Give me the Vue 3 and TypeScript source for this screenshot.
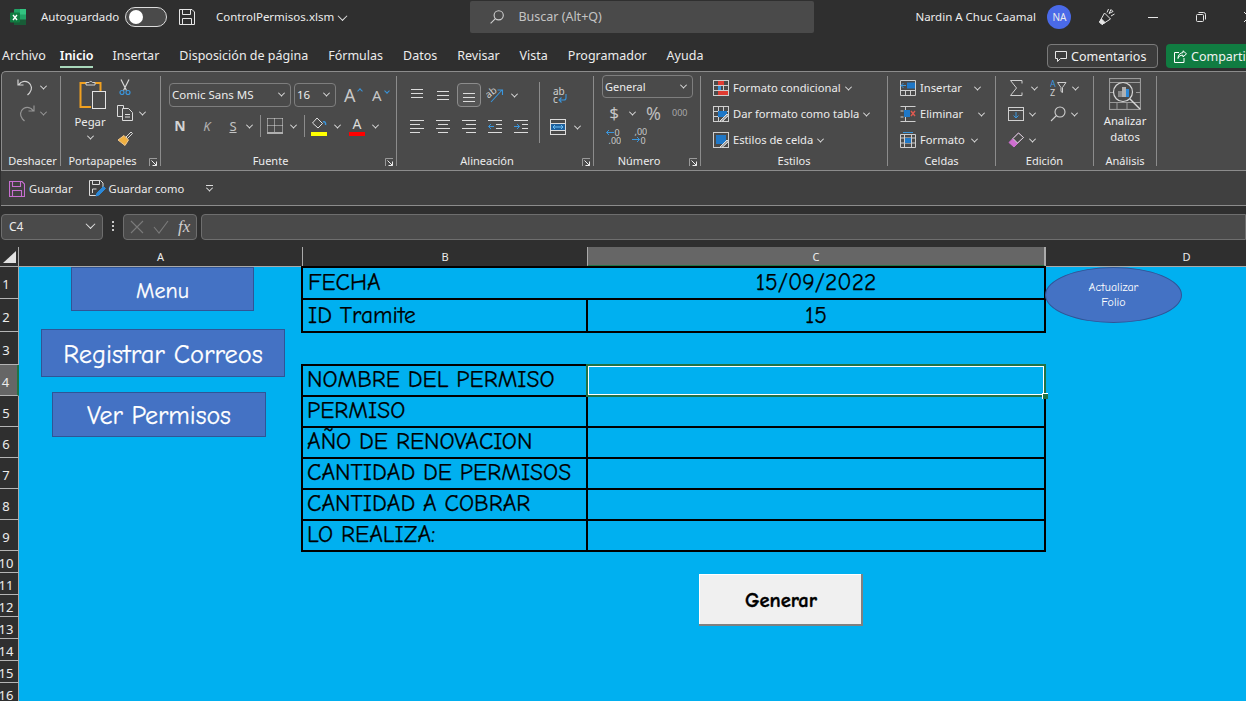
<script setup lang="ts">
interface SheetRow {
  num: number
  height: number
  label?: string
  value?: string
  kind?: 'merged' | 'cell'
}

const columns = [
  { name: 'A', active: false },
  { name: 'B', active: false },
  { name: 'C', active: true },
  { name: 'D', active: false }
]

const rows: SheetRow[] = [
  { num: 1, height: 32, label: 'FECHA', value: '15/09/2022', kind: 'merged' },
  { num: 2, height: 33, label: 'ID Tramite', value: '15', kind: 'cell' },
  { num: 3, height: 33 },
  { num: 4, height: 31, label: 'NOMBRE DEL PERMISO', kind: 'cell' },
  { num: 5, height: 31, label: 'PERMISO', kind: 'cell' },
  { num: 6, height: 31, label: 'AÑO DE RENOVACION', kind: 'cell' },
  { num: 7, height: 31, label: 'CANTIDAD DE PERMISOS', kind: 'cell' },
  { num: 8, height: 31, label: 'CANTIDAD A COBRAR', kind: 'cell' },
  { num: 9, height: 31, label: 'LO REALIZA:', kind: 'cell' },
  { num: 10, height: 22 },
  { num: 11, height: 22 },
  { num: 12, height: 22 },
  { num: 13, height: 22 },
  { num: 14, height: 22 },
  { num: 15, height: 22 },
  { num: 16, height: 22 }
]

const rowTracks = '20px ' + rows.map((r) => r.height + 'px').join(' ')

const tabs = ['Archivo', 'Inicio', 'Insertar', 'Disposición de página', 'Fórmulas', 'Datos', 'Revisar', 'Vista', 'Programador', 'Ayuda']

// x1, x2, y of every line in the 16x16 alignment glyphs
const alignTop = [[2, 14, 2], [2, 14, 6], [2, 14, 10]]
const alignMid = [[2, 14, 4], [2, 14, 8], [2, 14, 12]]
const alignBot = [[2, 14, 6], [2, 14, 10], [2, 14, 14]]
const alignLeft = [[1, 15, 2], [1, 11, 6], [1, 15, 10], [1, 11, 14]]
const alignCenter = [[1, 15, 2], [3, 13, 6], [1, 15, 10], [3, 13, 14]]
const alignRight = [[1, 15, 2], [5, 15, 6], [1, 15, 10], [5, 15, 14]]
const indentLines = [[1, 15, 2], [9, 15, 6], [9, 15, 10], [1, 15, 14]]
</script>

<template>
  <div class="app">
    <header class="title-bar">
      <svg class="xl-logo" width="16" height="16" viewBox="0 0 16 16">
        <rect x="4" y="0" width="12" height="16" rx="1" fill="#21a366" />
        <rect x="10" y="0" width="6" height="5.5" fill="#33c481" />
        <rect x="4" y="10.5" width="12" height="5.5" fill="#185c37" />
        <rect x="0" y="3.5" width="10" height="10" rx="1" fill="#107c41" />
        <path d="M3 6l4 5M7 6l-4 5" stroke="#fff" stroke-width="1.4" />
      </svg>
      <span class="auto-label">Autoguardado</span>
      <span class="toggle"><span class="knob"></span></span>
      <svg class="save-ico" width="16" height="16" viewBox="0 0 16 16" fill="none" stroke="#e6e6e6">
        <path d="M.5.5H13L15.5 3V15.5H.5z" />
        <path d="M3.5.5v5h8v-5M3.5 15.5v-6h9v6" />
      </svg>
      <span class="file-name">ControlPermisos.xlsm</span>
      <span class="chev chev-file"></span>
      <div class="search">
        <svg width="14" height="14" viewBox="0 0 14 14" fill="none" stroke="#d0d0d0" stroke-width="1.1">
          <circle cx="8.7" cy="5.3" r="4.6" />
          <path d="M5.4 8.6L.6 13.4" />
        </svg>
        <span>Buscar (Alt+Q)</span>
      </div>
      <span class="user">Nardin A Chuc Caamal</span>
      <span class="avatar">NA</span>
      <svg class="pen-ico" width="18" height="18" viewBox="0 0 18 18" fill="none" stroke="#e6e6e6">
        <path d="M6.5 5l6 6-8.500 5.500-2.500-2.500z" />
        <path d="M1.500 14l2-3 3.500 3.500-3 2z" fill="#e6e6e6" />
        <path d="M9 4.500L10.500 1M13 8l3.500-2M11 5.500l2-4 2 2z" />
      </svg>
      <span class="win-min"></span>
      <svg class="win-max" width="10" height="10" viewBox="0 0 10 10" fill="none" stroke="#e6e6e6">
        <rect x=".5" y="2.5" width="7" height="7" rx="1" />
        <path d="M2.5 .5h5a2 2 0 0 1 2 2v5" />
      </svg>
      <span class="win-close"></span>
    </header>

    <nav class="tabs">
      <span v-for="tab in tabs" :key="tab" class="tab" :class="{ 'tab-on': tab === 'Inicio', 'tab-first': tab === 'Archivo' }">{{ tab }}</span>
      <span class="tab-actions">
        <button class="comments">
          <svg width="12" height="12" viewBox="0 0 12 12" fill="none" stroke="#e6e6e6">
            <path d="M.5 1.500H11.500V8.500H5.500L2.500 11.500V8.500H.5z" />
          </svg>
          Comentarios
        </button>
        <button class="share">
          <svg width="13" height="13" viewBox="0 0 13 13" fill="none" stroke="#fff">
            <path d="M9 .8l3.500 3L9 7V5.200C6 5 4.500 6.500 4 8.500 4 5 6 2.800 9 2.600zM5 2.500H.5v10H10V8" />
          </svg>
          Compartir
        </button>
      </span>
    </nav>

    <section class="ribbon">
      <!-- Deshacer -->
      <div class="group g-undo">
        <div class="g-body stack-undo">
          <div class="irow">
            <svg width="18" height="18" viewBox="0 0 18 18" fill="none" stroke="#d2d2d2" stroke-width="1.2">
              <path d="M1 1.500V7H6.500M1.500 7C4 3.500 8 2.500 11.500 4.500c3.500 2.500 4 7 1 10.500l-2 2" />
            </svg>
            <span class="chev"></span>
          </div>
          <div class="irow dim">
            <svg width="18" height="18" viewBox="0 0 18 18" fill="none" stroke="#d2d2d2" stroke-width="1.2">
              <path d="M17 1.500V7H11.500M16.500 7C14 3.500 10 2.500 6.500 4.500c-3.500 2.500-4 7-1 10.500l2 2" />
            </svg>
            <span class="chev"></span>
          </div>
        </div>
        <div class="g-label label-undo">Deshacer</div>
      </div>

      <!-- Portapapeles -->
      <div class="group g-clip">
        <div class="g-body clip-body">
          <div class="paste">
            <svg width="28" height="30" viewBox="0 0 28 30" fill="none">
              <path d="M7 3H1.500V27H12" stroke="#f0a020" stroke-width="2" />
              <path d="M16 3h5.500v8" stroke="#f0a020" stroke-width="2" />
              <path d="M7 5V2.500h3a2 2 0 0 1 3.500 0H16V5z" stroke="#cfcfcf" />
              <rect x="13.500" y="11.500" width="13" height="17" stroke="#e4e4e4" />
            </svg>
            <span class="paste-label">Pegar</span>
            <span class="chev"></span>
          </div>
          <div class="clip-tools">
            <div class="irow">
              <svg width="16" height="16" viewBox="0 0 16 16" fill="none" stroke-width="1.2">
                <path d="M4 .5l5.500 11M12 .5L6.500 11.500" stroke="#d8d8d8" />
                <circle cx="5" cy="13.500" r="2" stroke="#3a96dd" />
                <circle cx="11" cy="13.500" r="2" stroke="#3a96dd" />
              </svg>
            </div>
            <div class="irow">
              <svg width="16" height="16" viewBox="0 0 16 16" fill="none" stroke="#dcdcdc">
                <path d="M6.500 3V.5h-6v11H5" />
                <path d="M5.500 3.500h6l4 4v8h-10zM8 9.500h5M8 12h5" />
              </svg>
              <span class="chev"></span>
            </div>
            <div class="irow">
              <svg width="16" height="16" viewBox="0 0 16 16" fill="none">
                <path d="M9 6l5-5 1.500 1.500-5 5z" stroke="#d8d8d8" />
                <path d="M7 4.500L11.500 9 8 14.500 1 9z" fill="#f0b040" stroke="#f0c890" />
              </svg>
            </div>
          </div>
        </div>
        <div class="g-label label-launch">Portapapeles</div>
        <svg class="launcher" width="8" height="8" viewBox="0 0 8 8" fill="none">
          <path d="M.5 8V.5H8" stroke="#9a9a9a" />
          <path d="M2.500 2.500l5 5M7.500 3.500v4h-4" stroke="#ececec" />
        </svg>
      </div>

      <!-- Fuente -->
      <div class="group g-font">
        <div class="g-body font-body">
          <div class="irow font-top">
            <span class="select font-name">Comic Sans MS<span class="chev"></span></span>
            <span class="select font-size">16<span class="chev"></span></span>
            <span class="grow">A<i class="caret-up"></i></span>
            <span class="shrink">A<i class="caret-down"></i></span>
          </div>
          <div class="irow font-bottom">
            <b class="fmt fmt-n">N</b>
            <i class="fmt fmt-k">K</i>
            <span class="fmt fmt-s">S</span>
            <span class="chev"></span>
            <span class="vsep"></span>
            <svg width="16" height="16" viewBox="0 0 16 16" fill="none" stroke="#dcdcdc">
              <path d="M.5 .5h15M.5 7.500h15M7.500 .5v14M.5 .5v14M15.500 .5v14" stroke-dasharray="1 1" />
              <path d="M0 15h16" stroke-width="1.4" />
            </svg>
            <span class="chev"></span>
            <span class="vsep"></span>
            <span class="swatch swatch-fill">
              <svg width="16" height="13" viewBox="0 0 16 13" fill="none">
                <path d="M6 1l5.500 5.500L7 11 1.500 6z" stroke="#e0e0e0" />
                <path d="M12 5c2-1 3 1 2.500 3" stroke="#3a96dd" stroke-width="1.5" />
              </svg>
            </span>
            <span class="chev"></span>
            <span class="swatch swatch-text">A</span>
            <span class="chev"></span>
          </div>
        </div>
        <div class="g-label label-launch">Fuente</div>
        <svg class="launcher" width="8" height="8" viewBox="0 0 8 8" fill="none">
          <path d="M.5 8V.5H8" stroke="#9a9a9a" />
          <path d="M2.500 2.500l5 5M7.500 3.500v4h-4" stroke="#ececec" />
        </svg>
      </div>

      <!-- Alineación -->
      <div class="group g-align">
        <div class="g-body align-body">
          <div class="align-grid">
            <div class="irow">
              <span class="abtn"><svg width="16" height="16" viewBox="0 0 16 16" stroke="#dcdcdc"><path v-for="(l, i) in alignTop" :key="i" :d="`M${l[0]} ${l[2] + 0.5}H${l[1]}`" /></svg></span>
              <span class="abtn"><svg width="16" height="16" viewBox="0 0 16 16" stroke="#dcdcdc"><path v-for="(l, i) in alignMid" :key="i" :d="`M${l[0]} ${l[2] + 0.5}H${l[1]}`" /></svg></span>
              <span class="abtn abtn-on"><svg width="16" height="16" viewBox="0 0 16 16" stroke="#dcdcdc"><path v-for="(l, i) in alignBot" :key="i" :d="`M${l[0]} ${l[2] + 0.5}H${l[1]}`" /></svg></span>
              <span class="abtn">
                <svg width="18" height="16" viewBox="0 0 18 16" fill="none">
                  <text x="0" y="9" class="orient" transform="rotate(-38 5 7)">ab</text>
                  <path d="M5 15L16 3M11.500 3H16.500V8" stroke="#3a96dd" stroke-width="1.1" />
                </svg>
              </span>
              <span class="chev"></span>
            </div>
            <div class="irow">
              <span class="abtn"><svg width="16" height="16" viewBox="0 0 16 16" stroke="#dcdcdc"><path v-for="(l, i) in alignLeft" :key="i" :d="`M${l[0]} ${l[2] + 0.5}H${l[1]}`" /></svg></span>
              <span class="abtn"><svg width="16" height="16" viewBox="0 0 16 16" stroke="#dcdcdc"><path v-for="(l, i) in alignCenter" :key="i" :d="`M${l[0]} ${l[2] + 0.5}H${l[1]}`" /></svg></span>
              <span class="abtn"><svg width="16" height="16" viewBox="0 0 16 16" stroke="#dcdcdc"><path v-for="(l, i) in alignRight" :key="i" :d="`M${l[0]} ${l[2] + 0.5}H${l[1]}`" /></svg></span>
              <span class="abtn">
                <svg width="16" height="16" viewBox="0 0 16 16" fill="none" stroke="#dcdcdc">
                  <path v-for="(l, i) in indentLines" :key="i" :d="`M${l[0]} ${l[2] + 0.5}H${l[1]}`" />
                  <path d="M7 8.500H1.500M4 6L1.500 8.500 4 11" stroke="#3a96dd" />
                </svg>
              </span>
              <span class="abtn">
                <svg width="16" height="16" viewBox="0 0 16 16" fill="none" stroke="#dcdcdc">
                  <path v-for="(l, i) in indentLines" :key="i" :d="`M${l[0]} ${l[2] + 0.5}H${l[1]}`" />
                  <path d="M1 8.500H6.500M4 6L6.500 8.500 4 11" stroke="#3a96dd" />
                </svg>
              </span>
            </div>
          </div>
          <span class="vsep tall"></span>
          <div class="wrap-col">
            <svg class="wrap-ico" width="16" height="18" viewBox="0 0 16 18" fill="none">
              <text x="1" y="8" class="orient">ab</text>
              <text x="1" y="16" class="orient">c</text>
              <path d="M14 7v4a2 2 0 0 1-2 2H7M9.500 10.500L7 13l2.500 2.500" stroke="#3a96dd" stroke-width="1.1" />
            </svg>
            <div class="irow merge">
              <svg width="16" height="16" viewBox="0 0 16 16" fill="none" stroke="#dcdcdc">
                <rect x=".5" y=".5" width="15" height="15" />
                <path d="M.5 4.500h15M.5 11.500h15" />
                <rect x="1" y="5" width="14" height="6" fill="#1d5f9c" stroke="none" />
                <path d="M3 8h10M5 6L3 8l2 2M11 6l2 2-2 2" stroke="#6cc0f5" />
              </svg>
              <span class="chev"></span>
            </div>
          </div>
        </div>
        <div class="g-label label-launch">Alineación</div>
        <svg class="launcher" width="8" height="8" viewBox="0 0 8 8" fill="none">
          <path d="M.5 8V.5H8" stroke="#9a9a9a" />
          <path d="M2.500 2.500l5 5M7.500 3.500v4h-4" stroke="#ececec" />
        </svg>
      </div>

      <!-- Número -->
      <div class="group g-num">
        <div class="g-body num-body">
          <span class="select num-format">General<span class="chev"></span></span>
          <div class="irow num-row">
            <span class="dollar">$</span>
            <span class="chev"></span>
            <span class="percent">%</span>
            <span class="thousands">000</span>
          </div>
          <div class="irow num-row2">
            <span class="dec">
              <svg width="16" height="16" viewBox="0 0 16 16" fill="none">
                <path d="M9 4.500H1.500M4 2L1.500 4.500 4 7" stroke="#3a96dd" />
                <text x="9.500" y="7.500" class="dec-text">0</text>
                <text x="3.500" y="15.500" class="dec-text">,00</text>
              </svg>
            </span>
            <span class="dec">
              <svg width="16" height="16" viewBox="0 0 16 16" fill="none">
                <path d="M1 11.500H8.500M6 9L8.500 11.500 6 14" stroke="#3a96dd" />
                <text x="3.500" y="7" class="dec-text">,00</text>
                <text x="9.500" y="15.500" class="dec-text">0</text>
              </svg>
            </span>
          </div>
        </div>
        <div class="g-label label-launch">Número</div>
        <svg class="launcher" width="8" height="8" viewBox="0 0 8 8" fill="none">
          <path d="M.5 8V.5H8" stroke="#9a9a9a" />
          <path d="M2.500 2.500l5 5M7.500 3.500v4h-4" stroke="#ececec" />
        </svg>
      </div>

      <!-- Estilos -->
      <div class="group g-styles">
        <div class="g-body list-body">
          <div class="irow list-row">
            <svg width="16" height="16" viewBox="0 0 16 16" fill="none" stroke="#cfcfcf">
              <rect x=".5" y=".5" width="15" height="15" />
              <path d="M5.500 .5v15M10.500 .5v15M.5 5.500h15M.5 10.500h15" />
              <rect x="5" y="1" width="6" height="4" fill="#e03c32" stroke="none" />
              <rect x="5" y="6" width="3" height="4" fill="#3a96dd" stroke="none" />
              <rect x="5" y="11" width="10" height="4" fill="#e03c32" stroke="none" />
            </svg>
            <span>Formato condicional</span><span class="chev"></span>
          </div>
          <div class="irow list-row">
            <svg width="16" height="16" viewBox="0 0 16 16" fill="none" stroke="#cfcfcf">
              <rect x=".5" y=".5" width="15" height="15" />
              <path d="M.5 5.500h15M.5 10.500h15M5.500 .5v15M10.500 .5v15" />
              <rect x="5" y="5" width="9" height="6" fill="#1f78c8" stroke="none" />
              <path d="M7 15l7-7 1.500 1.500-7 6.500z" fill="#9a9a9a" stroke="#e0e0e0" />
            </svg>
            <span>Dar formato como tabla</span><span class="chev"></span>
          </div>
          <div class="irow list-row">
            <svg width="16" height="16" viewBox="0 0 16 16" fill="none" stroke="#cfcfcf">
              <rect x=".5" y=".5" width="15" height="15" />
              <rect x="3" y="3" width="10" height="9" fill="#1f78c8" stroke="none" />
              <path d="M7 15l7-7 1.500 1.500-7 6.500z" fill="#9a9a9a" stroke="#e0e0e0" />
            </svg>
            <span>Estilos de celda</span><span class="chev"></span>
          </div>
        </div>
        <div class="g-label">Estilos</div>
      </div>

      <!-- Celdas -->
      <div class="group g-cells">
        <div class="g-body list-body">
          <div class="irow list-row">
            <svg width="16" height="16" viewBox="0 0 16 16" fill="none" stroke="#cfcfcf">
              <path d="M.5 .5h15v15H.5zM.5 10.500h15M5.500 10.500v5M10.500 10.500v5" />
              <rect x="7" y="2.500" width="8" height="6" fill="#1f78c8" stroke="none" />
              <path d="M6 5.500H1M3.500 3L1 5.500 3.500 8" stroke="#3a96dd" />
            </svg>
            <span class="cells-text ct-insert">Insertar</span><span class="chev"></span>
          </div>
          <div class="irow list-row">
            <svg width="16" height="16" viewBox="0 0 16 16" fill="none" stroke="#cfcfcf">
              <path d="M.5 .5h15M.5 15.500h15M.5 5h3M.5 11h3M5.500 .5v15" />
              <rect x="4" y="4" width="6" height="7" fill="#1f78c8" stroke="none" />
              <path d="M11 5l4 5M15 5l-4 5" stroke="#e05a50" stroke-width="1.4" />
            </svg>
            <span class="cells-text ct-delete">Eliminar</span><span class="chev"></span>
          </div>
          <div class="irow list-row">
            <svg width="16" height="16" viewBox="0 0 16 16" fill="none" stroke="#cfcfcf">
              <path d="M.5 2.500h15v13H.5zM.5 11h15M.5 6h15M4.500 2.500v13M11.500 2.500v13" />
              <rect x="5" y="6" width="6" height="5" fill="#1f78c8" stroke="none" />
              <path d="M3 .5h10" stroke="#3a96dd" />
            </svg>
            <span class="cells-text ct-format">Formato</span><span class="chev"></span>
          </div>
        </div>
        <div class="g-label">Celdas</div>
      </div>

      <!-- Edición -->
      <div class="group g-edit">
        <div class="g-body edit-body">
          <div class="irow edit-row">
            <span class="edit-cell">
              <svg class="sum-ico" width="16" height="16" viewBox="0 0 16 16" fill="none" stroke="#cfcfcf">
                <path d="M14 3.500V.5H2.500L8.500 8l-6 7.500H14v-3" />
              </svg>
              <span class="chev"></span>
            </span>
            <span class="edit-cell">
              <svg width="17" height="16" viewBox="0 0 17 16" fill="none">
                <text x="0" y="7" class="az az-a">A</text>
                <text x="0" y="16" class="az">Z</text>
                <path d="M7.500 2.500H16L12.500 7.500v5L11 11.500v-4z" stroke="#cfcfcf" />
              </svg>
              <span class="chev"></span>
            </span>
          </div>
          <div class="irow edit-row">
            <span class="edit-cell">
              <svg width="16" height="14" viewBox="0 0 16 14" fill="none" stroke="#cfcfcf">
                <rect x=".5" y=".5" width="15" height="13" />
                <path d="M.5 3.500h15" />
                <path d="M8 5v6M5.500 8.500L8 11l2.500-2.500" stroke="#3a96dd" />
              </svg>
              <span class="chev"></span>
            </span>
            <span class="edit-cell">
              <svg width="16" height="16" viewBox="0 0 16 16" fill="none" stroke="#cfcfcf" stroke-width="1.1">
                <circle cx="10" cy="6" r="5" />
                <path d="M6.500 9.500L1 15" />
              </svg>
              <span class="chev"></span>
            </span>
          </div>
          <div class="irow edit-row">
            <span class="edit-cell">
              <svg width="16" height="16" viewBox="0 0 16 16" fill="none">
                <path d="M1 10.500L10.500 1l5 4.500L6 15z" fill="#cf6fd0" stroke="#cf6fd0" />
                <path d="M5 6.500l4.500 4.500 6-5.500-5-4.500z" fill="#4a4a4a" stroke="#d8d8d8" />
              </svg>
              <span class="chev"></span>
            </span>
          </div>
        </div>
        <div class="g-label">Edición</div>
      </div>

      <!-- Análisis -->
      <div class="group g-analysis">
        <div class="g-body analysis-body">
          <svg width="32" height="32" viewBox="0 0 32 32" fill="none" stroke="#9a9a9a">
            <rect x=".5" y=".5" width="31" height="31" stroke-width="1.2" />
            <path d="M.5 4.500h31M.5 24.500h31M.5 14.500h4M8 24.500v7M18 24.500v7M27 14.500h4" />
            <circle cx="14" cy="14" r="9.500" stroke="#d8d8d8" stroke-width="1.2" fill="#4a4a4a" />
            <rect x="9" y="13" width="4" height="6" fill="#8a8a8a" stroke="none" />
            <rect x="13" y="9" width="4" height="10" fill="#b0b0b0" stroke="none" />
            <rect x="17" y="11" width="3" height="8" fill="#2b88d8" stroke="none" />
            <path d="M21 21l10 10" stroke="#d8d8d8" stroke-width="1.4" />
          </svg>
          <span class="analysis-text">Analizar<br />datos</span>
        </div>
        <div class="g-label">Análisis</div>
      </div>
    </section>

    <section class="qat">
      <svg width="16" height="16" viewBox="0 0 16 16" fill="none" stroke="#c76fd0" stroke-width="1.1">
        <path d="M.5.5H13L15.500 3V15.500H.5z" />
        <path d="M3.500.5v5h8v-5M3.500 15.500v-6h9v6" />
      </svg>
      <span class="qat-save">Guardar</span>
      <svg class="qat-as" width="17" height="17" viewBox="0 0 17 17" fill="none" stroke="#dcdcdc">
        <path d="M7 15.500H.5V.5h11L14 3v4" />
        <path d="M3.500 .5v4h7v-4M3.500 13V9h4" />
        <path d="M7 16l1-3 6.500-6.500 2 2L10 15z" fill="#2b88d8" stroke="#2b88d8" />
      </svg>
      <span class="qat-saveas">Guardar como</span>
      <span class="qat-more"><i></i><span class="chev"></span></span>
    </section>

    <section class="formula-bar">
      <span class="name-box">C4<span class="chev"></span></span>
      <span class="dots"></span>
      <span class="fx-box">
        <svg width="14" height="14" viewBox="0 0 14 14" fill="none" stroke="#7b7b7b" stroke-width="1.1"><path d="M1 1l12 12M13 1L1 13" /></svg>
        <svg width="16" height="14" viewBox="0 0 16 14" fill="none" stroke="#7b7b7b" stroke-width="1.1"><path d="M1 7l5 6L15 1" /></svg>
        <i class="fx">fx</i>
      </span>
      <span class="formula-input"></span>
    </section>

    <section class="sheet" :style="{ gridTemplateRows: rowTracks }">
      <div class="corner">
        <svg width="13" height="12" viewBox="0 0 13 12"><path d="M13 0v12H0z" fill="#e2e2e2" /></svg>
      </div>
      <div v-for="col in columns" :key="col.name" class="col-head" :class="{ 'col-on': col.active }">{{ col.name }}</div>

      <template v-for="row in rows" :key="row.num">
        <div class="row-head" :class="{ 'row-on': row.num === 4 }">{{ row.num }}</div>
        <div class="blank"></div>
        <template v-if="row.kind === 'merged'">
          <div class="cell cell-merged">
            <span class="label-a">{{ row.label }}</span>
            <span class="value">{{ row.value }}</span>
          </div>
        </template>
        <template v-else-if="row.kind === 'cell'">
          <div class="cell" :class="{ 'label-a': row.num < 3, 'label-b': row.num > 3, 'cell-tall': row.num === 2 }">{{ row.label }}</div>
          <div class="cell value" :class="{ selected: row.num === 4, 'cell-tall': row.num === 2 }">{{ row.value }}</div>
        </template>
        <template v-else>
          <div class="blank"></div>
          <div class="blank"></div>
        </template>
        <div class="blank"></div>
      </template>

      <button class="shape shape-menu">Menu</button>
      <button class="shape shape-mail">Registrar Correos</button>
      <button class="shape shape-view">Ver Permisos</button>
      <button class="shape-oval">Actualizar<br />Folio</button>
      <button class="generate">Generar</button>
    </section>
  </div>
</template>

<style>
html,
body {
  margin: 0;
  background: #2f2f2f;
  overflow: hidden;
}
</style>

<style scoped>
.app {
  --ui: "Noto Sans", "Open Sans", sans-serif;
  --comic: "Comic Sans MS", "Comic Neue", cursive;
  position: relative;
  width: 1246px;
  height: 701px;
  overflow: hidden;
  background: #2f2f2f;
  color: #ececec;
  font: 12px/16px var(--ui);
  display: flex;
  flex-direction: column;
}

button {
  font-family: inherit;
  padding: 0;
}

svg {
  display: block;
  flex: none;
}

.chev {
  display: inline-block;
  flex: none;
  width: 4px;
  height: 4px;
  border-right: 1.3px solid #e4e4e4;
  border-bottom: 1.3px solid #e4e4e4;
  transform: rotate(45deg) translate(-1px, -1px);
}

.irow {
  display: flex;
  align-items: center;
}

.dim {
  opacity: 0.55;
}

/* title bar */
.title-bar {
  flex: none;
  height: 34px;
  margin-bottom: 2px;
  display: flex;
  align-items: center;
  padding-left: 10px;
  font-size: 11.5px;
  white-space: nowrap;
}

.title-bar > * {
  flex: none;
}

.auto-label {
  margin-left: 15px;
  width: 84px;
}

.toggle {
  width: 42px;
  height: 20px;
  box-sizing: border-box;
  border: 1px solid #dcdcdc;
  border-radius: 10px;
  background: #4a4a4a;
  display: flex;
  align-items: center;
  padding-left: 3px;
}

.knob {
  width: 14px;
  height: 14px;
  border-radius: 50%;
  background: #fff;
}

.save-ico {
  margin-left: 12px;
}

.file-name {
  margin-left: 21px;
  width: 116px;
}

.chev-file {
  margin-left: 7px;
  width: 6px;
  height: 6px;
}

.search {
  margin-left: 124.4px;
  width: 344px;
  height: 32px;
  background: #4a4a4a;
  border-radius: 2px;
  display: flex;
  align-items: center;
  padding-left: 20px;
  box-sizing: border-box;
  gap: 14px;
  color: #c4c4c4;
  font-size: 12.5px;
}

.user {
  margin-left: 101px;
  width: 121px;
}

.avatar {
  margin-left: 11px;
  width: 24px;
  height: 24px;
  border-radius: 50%;
  background: #4a6ae8;
  font-size: 10px;
  line-height: 24px;
  text-align: center;
}

.pen-ico {
  margin-left: 27px;
}

.win-min {
  margin-left: 32px;
  width: 10px;
  height: 1px;
  background: #e6e6e6;
}

.win-max {
  margin-left: 38px;
}

.win-close {
  margin-left: 38px;
  width: 10px;
  height: 10px;
  background:
    linear-gradient(45deg, transparent 46%, #e6e6e6 46%, #e6e6e6 54%, transparent 54%),
    linear-gradient(-45deg, transparent 46%, #e6e6e6 46%, #e6e6e6 54%, transparent 54%);
}

/* tabs */
.tabs {
  flex: none;
  height: 35px;
  box-sizing: border-box;
  padding: 8px 0 0 2px;
  display: flex;
  align-items: flex-start;
  gap: 20px;
  white-space: nowrap;
  font-size: 12.5px;
}

.tab {
  line-height: 24px;
  height: 24px;
  box-sizing: border-box;
}

.tab-first {
  margin-right: -6px;
}

.tab-on {
  margin-right: -1px;
  font-weight: 600;
  color: #fff;
  border-bottom: 2px solid #a9d8bb;
}

.tab-actions {
  flex: none;
  margin-left: auto;
  margin-right: -30px;
  display: flex;
  gap: 8px;
}

.comments,
.share {
  height: 24px;
  border-radius: 4px;
  color: #f2f2f2;
  font-size: 12.5px;
  display: flex;
  align-items: center;
  gap: 4px;
  box-sizing: border-box;
  white-space: nowrap;
}

.comments {
  width: 111px;
  background: #3c3c3c;
  border: 1px solid #7a7a7a;
  padding-left: 7px;
}

.share {
  width: 110px;
  background: #107c41;
  border: 0;
  padding-left: 8px;
}

/* ribbon */
.ribbon {
  flex: none;
  height: 99px;
  margin-left: 1px;
  box-sizing: border-box;
  background: #4a4a4a;
  border-top: 1px solid #8c8c8c;
  border-left: 1px solid #8c8c8c;
  border-radius: 5px 0 0 0;
  display: flex;
  font-size: 11.3px;
}

.group {
  position: relative;
  flex: none;
  box-sizing: border-box;
  height: 90px;
  margin-top: 4px;
  border-right: 1px solid #8c8c8c;
  display: flex;
  flex-direction: column;
}

.g-body {
  flex: 1;
  min-height: 0;
}

.g-label {
  height: 14px;
  line-height: 14px;
  margin-bottom: -2px;
  font-size: 11px;
  text-align: center;
  color: #ececec;
  white-space: nowrap;
}

.label-undo {
  padding-left: 3px;
}

.label-launch {
  padding-right: 16px;
}

.launcher {
  position: absolute;
  right: 3px;
  bottom: 0;
}

.g-undo {
  width: 59px;
}

.stack-undo {
  padding: 2px 0 0 15px;
  display: flex;
  flex-direction: column;
  gap: 8px;
}

.stack-undo .irow {
  gap: 6px;
}

.g-clip {
  width: 100px;
}

.clip-body {
  display: flex;
  padding: 4px 0 0 15px;
}

.paste {
  width: 28px;
  display: flex;
  flex-direction: column;
  align-items: center;
}

.paste svg {
  margin-left: 5px;
}

.paste-label {
  margin-top: 4px;
}

.paste .chev {
  margin-top: 5px;
}

.clip-tools {
  margin: -1px 0 0 13px;
  display: flex;
  flex-direction: column;
  gap: 10px;
}

.clip-tools .irow {
  gap: 7px;
}

.g-font {
  width: 236px;
}

.font-top {
  padding: 7px 0 0 8px;
  gap: 3px;
}

.select {
  position: relative;
  box-sizing: border-box;
  height: 24px;
  display: flex;
  align-items: center;
  padding-left: 2px;
  border: 1px solid #7e7e7e;
  border-radius: 4px;
  white-space: nowrap;
  font-size: 11.5px;
}

.select .chev {
  position: absolute;
  right: 6px;
  top: 8px;
}

.font-name {
  width: 122px;
}

.font-size {
  width: 42px;
}

.grow,
.shrink {
  position: relative;
  color: #c8c8c8;
  width: 14px;
}

.grow {
  margin-left: 5px;
  font-size: 18px;
}

.shrink {
  margin-left: 11px;
  font-size: 15px;
}

.caret-up,
.caret-down {
  position: absolute;
  right: -4px;
  width: 3px;
  height: 3px;
  border-left: 1px solid #3a96dd;
  border-top: 1px solid #3a96dd;
  top: 2px;
  transform: rotate(45deg);
}

.caret-down {
  transform: rotate(225deg);
  right: -3px;
}

.font-bottom {
  margin-top: 8px;
  padding-left: 13px;
  height: 22px;
}

.fmt {
  width: 12px;
  text-align: center;
  font-size: 14px;
  color: #d4d4d4;
}

.fmt-k {
  margin-left: 15px;
  color: #b0b0b0;
  font-size: 13px;
}

.fmt-s {
  margin-left: 14px;
  text-decoration: underline;
  font-size: 13px;
  color: #c4c4c4;
}

.font-bottom > .chev {
  margin-left: 8px;
}

.font-bottom > .vsep {
  margin: 0 6px 0 8px;
}

.vsep {
  flex: none;
  display: block;
  width: 1px;
  height: 22px;
  background: #8c8c8c;
}

.swatch {
  width: 16px;
  height: 19px;
  box-sizing: border-box;
  display: block;
}

.swatch-fill {
  border-bottom: 4px solid #ffff00;
}

.swatch-text {
  margin-left: 9px;
  border-bottom: 4px solid #ff0000;
  font-size: 14px;
  line-height: 14px;
  text-align: center;
  color: #dcdcdc;
}

.g-align {
  width: 197px;
}

.align-body {
  display: flex;
  padding: 7px 0 0 8px;
}

.align-grid {
  width: 128px;
  flex: none;
  display: flex;
  flex-direction: column;
  gap: 7px;
}

.align-grid .irow {
  height: 24px;
  gap: 2px;
}

.abtn {
  flex: none;
  width: 24px;
  height: 24px;
  box-sizing: border-box;
  display: flex;
  align-items: center;
  justify-content: center;
}

.abtn-on {
  border: 1px solid #8c8c8c;
  border-radius: 4px;
  background: #555;
}

.orient {
  font: 10px var(--ui);
  fill: #d0d0d0;
}

.align-grid .chev {
  margin-left: 3px;
}

.vsep.tall {
  height: 61px;
  margin: -1px 0 0 6px;
}

.wrap-col {
  margin-left: 10px;
  display: flex;
  flex-direction: column;
  gap: 14px;
  padding-top: 4px;
}

.wrap-ico {
  margin-left: 2px;
}

.merge {
  gap: 9px;
}

.g-num {
  width: 107px;
}

.num-body {
  padding: 0 0 0 8px;
  margin-top: -1px;
}

.num-format {
  width: 91px;
  height: 23px;
  margin-bottom: 3px;
  font-size: 11px;
}

.num-row {
  height: 24px;
}

.dollar {
  margin-left: 6px;
  width: 12px;
  font-size: 17px;
  color: #c8c8c8;
  text-align: center;
}

.num-row .chev {
  margin-left: 10px;
}

.percent {
  margin-left: 11px;
  font-size: 18px;
  color: #bdbdbd;
  width: 18px;
}

.thousands {
  margin-left: 8px;
  font-size: 9px;
  color: #a8a8a8;
}

.num-row2 {
  margin: 3px 0 0 3px;
  gap: 10px;
}

.dec-text {
  font: 9px var(--ui);
  fill: #c8c8c8;
}

.g-styles {
  width: 187px;
}

.list-body {
  padding: 4px 0 0 12px;
  display: flex;
  flex-direction: column;
  gap: 10px;
}

.list-row {
  height: 16px;
  gap: 4px;
  white-space: nowrap;
  font-size: 11.2px;
}

.list-row .chev {
  margin-left: 1px;
}

.g-cells {
  width: 108px;
}

.ct-insert {
  width: 50px;
}

.ct-delete {
  width: 54px;
}

.ct-format {
  width: 47px;
}

.g-edit {
  width: 98px;
}

.edit-body {
  padding: 4px 0 0 12px;
  display: flex;
  flex-direction: column;
  gap: 10px;
}

.edit-row {
  height: 16px;
}

.edit-cell {
  width: 42px;
  display: flex;
  align-items: center;
  gap: 6px;
}

.sum-ico + .chev {
  margin-left: 2px;
}

.az {
  font: 9px var(--ui);
  fill: #d0d0d0;
}

.az-a {
  fill: #3a96dd;
}

.g-analysis {
  width: 63px;
}

.analysis-body {
  padding-top: 2px;
  display: flex;
  flex-direction: column;
  align-items: center;
}

.analysis-text {
  margin-top: 3px;
  text-align: center;
}

/* quick access */
.qat {
  flex: none;
  height: 36px;
  box-sizing: border-box;
  margin-left: 1px;
  padding: 1px 0 0 8px;
  background: #404040;
  border-top: 1px solid #8c8c8c;
  border-bottom: 1px solid #8c8c8c;
  display: flex;
  align-items: center;
  font-size: 11.2px;
}

.qat-save {
  margin-left: 4px;
}

.qat-as {
  margin-left: 16px;
}

.qat-saveas {
  margin-left: 3px;
}

.qat-more {
  margin-left: 22px;
  display: flex;
  flex-direction: column;
  align-items: center;
  gap: 1px;
}

.qat-more i {
  display: block;
  width: 7px;
  height: 1px;
  background: #dcdcdc;
}

/* formula bar */
.formula-bar {
  flex: none;
  height: 41px;
  box-sizing: border-box;
  padding: 8px 0 7px 1px;
  display: flex;
  align-items: stretch;
}

.name-box,
.fx-box,
.formula-input {
  box-sizing: border-box;
  background: #4a4a4a;
  border: 1px solid #6e6e6e;
  border-radius: 4px;
}

.name-box {
  position: relative;
  width: 102px;
  padding-left: 7px;
  line-height: 24px;
}

.name-box .chev {
  position: absolute;
  right: 8px;
  top: 7px;
  width: 6px;
  height: 6px;
}

.dots {
  width: 2px;
  margin: 6px 9px 8px 9px;
  background: radial-gradient(circle, #c8c8c8 1px, transparent 1.2px) 0 0 / 2px 4px;
}

.fx-box {
  width: 74px;
  display: flex;
  align-items: center;
  padding-left: 6px;
  gap: 9px;
}

.fx {
  font: italic 17px "Liberation Serif", serif;
  color: #d0d0d0;
}

.formula-input {
  margin-left: 4px;
  flex: 1;
  border-radius: 4px 0 0 4px;
}

/* sheet */
.sheet {
  position: relative;
  flex: none;
  width: 1327px;
  height: 460px;
  background: #00b0f0;
  display: grid;
  grid-template-columns: 19px 283px 285px 458px 282px;
  font-family: var(--comic);
  color: #000;
}

.corner,
.col-head,
.row-head {
  background: #2f2f2f;
  font-family: var(--ui);
  color: #ececec;
  box-sizing: border-box;
}

.corner {
  display: flex;
  align-items: flex-end;
  padding: 0 0 3px 3px;
  border-right: 1px solid #aaa;
  border-bottom: 1px solid #aaa;
}

.col-head {
  text-align: center;
  line-height: 20px;
  font-size: 11px;
  border-bottom: 1px solid #aaa;
}

.col-head + .col-head {
  border-left: 1px solid #aaa;
}

.col-on {
  background: #666;
  border-right: 1px solid #aaa;
  border-bottom: 2px solid #217346;
}

.row-head {
  display: flex;
  align-items: center;
  justify-content: center;
  font-size: 13px;
  padding: 3px 6px 0 0;
  border-right: 1px solid #aaa;
  border-bottom: 1px solid #b4b4b4;
  overflow: hidden;
}

.row-on {
  background: #666;
  border-right: 2px solid #217346;
}

.cell {
  box-sizing: border-box;
  box-shadow: 0 0 0 1px #000, inset 0 0 0 1px #000;
  font-size: 23.5px;
  line-height: 30px;
  white-space: nowrap;
  -webkit-text-stroke: 0.25px #000;
}

.cell-tall {
  line-height: 33px;
}

.cell-merged {
  grid-column: span 2;
  display: grid;
  grid-template-columns: 285px 458px;
  line-height: 31px;
}

.label-a {
  padding-left: 6px;
}

.label-b {
  padding-left: 5px;
}

.value {
  text-align: center;
}

.selected {
  position: relative;
  z-index: 1;
  box-shadow: 0 0 0 1px #217346, inset 0 0 0 1px #217346, inset 0 0 0 2px #fff;
}

.selected::after {
  content: "";
  position: absolute;
  right: -3px;
  bottom: -3px;
  width: 5px;
  height: 5px;
  background: #217346;
  border-top: 1px solid #fff;
  border-left: 1px solid #fff;
}

.shape,
.shape-oval {
  position: absolute;
  box-sizing: border-box;
  background: #4472c4;
  border: 1px solid #2f5597;
  color: #fff;
  font-family: var(--comic);
  -webkit-text-stroke: 0.25px #fff;
}

.shape {
  padding-top: 2px;
}

.shape-menu {
  left: 71px;
  top: 20px;
  width: 183px;
  height: 44px;
  padding-top: 4px;
  font-size: 22px;
}

.shape-mail {
  left: 41px;
  top: 82px;
  width: 244px;
  height: 48px;
  font-size: 26.5px;
}

.shape-view {
  left: 52px;
  top: 145px;
  width: 214px;
  height: 45px;
  font-size: 26px;
}

.shape-oval {
  left: 1045px;
  top: 20px;
  width: 137px;
  height: 56px;
  border-radius: 50%;
  font-size: 12px;
  line-height: 15px;
  -webkit-text-stroke: 0;
}

.generate {
  position: absolute;
  left: 699px;
  top: 327px;
  width: 164px;
  height: 52px;
  box-sizing: border-box;
  background: #f0f0f0;
  border: 0;
  box-shadow: inset -2px -2px 0 #808080, inset 1px 1px 0 #fff;
  color: #000;
  font: bold 20.5px var(--comic);
  -webkit-text-stroke: 0.4px #000;
}
</style>
